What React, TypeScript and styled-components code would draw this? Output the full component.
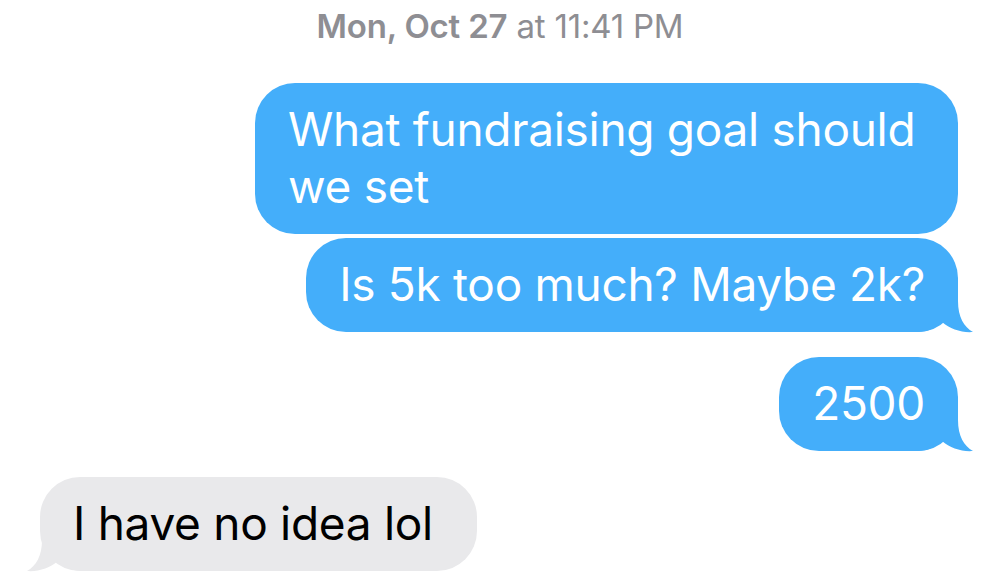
import React from 'react'
import styled, { createGlobalStyle } from 'styled-components'

const GlobalStyle = createGlobalStyle`
  html, body {
    margin: 0;
    padding: 0;
    background: #fff;
  }
  body {
    font-family: Inter, "Noto Sans", sans-serif;
  }
`

const Thread = styled.div`
  width: 1000px;
  height: 581px;
  overflow: hidden;
  display: flex;
  flex-direction: column;
  background: #fff;
`

const Stamp = styled.div`
  text-align: center;
  color: #8e8e93;
  font-size: 33px;
  line-height: 40px;
  padding-top: 6px;
  margin-bottom: 37px;
  letter-spacing: -0.2px;
  b {
    font-weight: 600;
  }
`

const Row = styled.div<{ $mine?: boolean; $gap: number }>`
  display: flex;
  justify-content: ${p => (p.$mine ? 'flex-end' : 'flex-start')};
  padding: 0 42px 0 40px;
  margin-top: ${p => p.$gap}px;
`

const Bubble = styled.div<{ $mine?: boolean }>`
  position: relative;
  isolation: isolate;
  max-width: 637px;
  padding: 18px 33px 19px 33px;
  border-radius: 40px;
  font-size: 46px;
  line-height: 57px;
  letter-spacing: -0.3px;
  color: ${p => (p.$mine ? '#fff' : '#000')};
  background: ${p => (p.$mine ? '#44aefa' : '#e9e9eb')};
  ${p => !p.$mine && 'padding-right: 44px;'}
`

const Text = styled.span`
  position: relative;
  z-index: 1;
`

const Tail = styled.svg<{ $mine?: boolean }>`
  position: absolute;
  z-index: 0;
  bottom: -1px;
  width: 56px;
  height: 44px;
  ${p => (p.$mine ? 'right: -16px;' : 'left: -14px; transform: scaleX(-1);')}
  path {
    fill: ${p => (p.$mine ? '#44aefa' : '#e9e9eb')};
  }
`

function BubbleTail({ mine }: { mine?: boolean }) {
  return (
    <Tail $mine={mine} viewBox="0 0 56 44">
      <path d="M0 0 L40 0 L40 12 C40 28 46 38 55 43 C44 44 32 40 24 33 C18 38 10 43 0 43 Z" />
    </Tail>
  )
}

const messages = [
  { mine: true, gap: 0, text: 'What fundraising goal should we set', tail: false },
  { mine: true, gap: 4, text: 'Is 5k too much? Maybe 2k?', tail: true },
  { mine: true, gap: 25, text: '2500', tail: true },
  { mine: false, gap: 26, text: 'I have no idea lol', tail: true },
]

export default function App() {
  return (
    <>
      <GlobalStyle />
      <Thread>
        <Stamp>
          <b>Mon, Oct 27</b> at 11:41 PM
        </Stamp>
        {messages.map((m, i) => (
          <Row key={i} $mine={m.mine} $gap={m.gap}>
            <Bubble $mine={m.mine}>
              <Text>{m.text}</Text>
              {m.tail && <BubbleTail mine={m.mine} />}
            </Bubble>
          </Row>
        ))}
      </Thread>
    </>
  )
}
